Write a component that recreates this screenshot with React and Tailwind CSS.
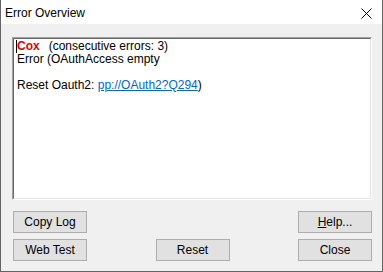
import React from 'react';

const font = { fontFamily: '"Liberation Sans", Arial, sans-serif' };

const Button = ({ children, className = '' }) => (
  <button className={`w-[74px] h-[22px] bg-[#e1e1e1] border border-[#adadad] text-[12px] text-black leading-none flex items-center justify-center ${className}`}>
    {children}
  </button>
);

export default function App() {
  return (
    <div className="w-[383px] h-[272px] bg-[#f0f0f0] border-x border-b border-[#646464] flex flex-col font-['Liberation_Sans',Arial,sans-serif] text-[12px] text-black">
      {/* Title bar */}
      <div className="h-[24px] bg-white flex items-center justify-between pl-[4px] pr-[10px] shrink-0">
        <span className="pt-[1px]">Error Overview</span>
        <svg width="11" height="11" viewBox="0 0 11 11" className="mt-[2px]">
          <path d="M0.5 0.5L10.5 10.5M10.5 0.5L0.5 10.5" stroke="#000" strokeWidth="1" />
        </svg>
      </div>

      {/* Log box */}
      <div className="mt-[13px] ml-[11px] w-[360px] h-[163px] border-t border-l border-[#a0a0a0] border-r border-b border-r-white border-b-white">
        <div className="w-full h-full bg-white border-t border-l border-[#696969] border-r border-b border-r-[#e3e3e3] border-b-[#e3e3e3] pl-[2px] pt-[1px] leading-[13px]">
          <div className="flex items-center">
            <span className="w-[1px] h-[13px] bg-black mr-[0px]"></span>
            <span className="text-[#e00000] font-bold">Cox</span>
            <span className="ml-[9px]">(consecutive errors: 3)</span>
          </div>
          <div className="pl-[1px]">Error (OAuthAccess empty</div>
          <div className="h-[13px]"></div>
          <div className="pl-[1px]">
            Reset Oauth2: <span className="text-[#0066cc] underline">pp://OAuth2?Q294</span>)
          </div>
        </div>
      </div>

      {/* Buttons */}
      <div className="ml-[12px] mr-[10px] mt-[11px] flex flex-col gap-[6px]">
        <div className="flex justify-between">
          <Button>Copy Log</Button>
          <Button><span><span className="underline">H</span>elp...</span></Button>
        </div>
        <div className="flex justify-between">
          <Button>Web Test</Button>
          <Button>Reset</Button>
          <Button>Close</Button>
        </div>
      </div>
    </div>
  );
}
